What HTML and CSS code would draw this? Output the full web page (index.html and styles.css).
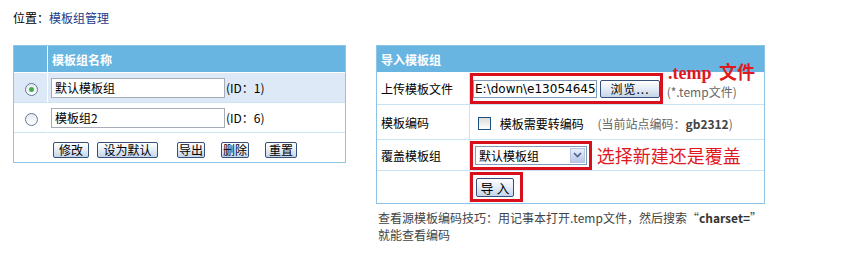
FILE: index.html
```html
<!DOCTYPE html>
<html lang="zh-CN">
<head>
    <meta charset="UTF-8">
    <title>模板组管理</title>
    <link rel="stylesheet" href="styles.css">
</head>
<body>

<div class="crumb">位置：<a href="#">模板组管理</a></div>

<div class="main">
    <!-- 模板组列表 -->
    <table class="grid grid-left">
        <colgroup>
            <col class="c-radio">
            <col>
        </colgroup>
        <tr class="head">
            <th class="col-radio"></th>
            <th>模板组名称</th>
        </tr>
        <tr class="row-on">
            <td class="col-radio"><span class="radio checked"></span></td>
            <td><input class="txt" type="text" value="默认模板组"><span class="id">(ID：1)</span></td>
        </tr>
        <tr>
            <td class="col-radio"><span class="radio"></span></td>
            <td><input class="txt" type="text" value="模板组2"><span class="id">(ID：6)</span></td>
        </tr>
        <tr class="row-btns">
            <td class="col-radio"></td>
            <td>
                <div class="btns">
                    <button class="btn w36">修改</button>
                    <button class="btn w61">设为默认</button>
                    <button class="btn w28">导出</button>
                    <button class="btn w28">删除</button>
                    <button class="btn w32">重置</button>
                </div>
            </td>
        </tr>
    </table>

    <!-- 导入模板组 -->
    <div class="side">
        <table class="grid grid-right">
            <colgroup>
                <col class="c-label">
                <col>
            </colgroup>
            <tr class="head">
                <th colspan="2">导入模板组</th>
            </tr>
            <tr class="r1">
                <td class="label">上传模板文件</td>
                <td class="val">
                    <span class="mark mark-file">
                        <input class="file-path" type="text" value="E:\down\e1305464583">
                        <button class="btn browse">浏览...</button>
                    </span>
                    <span class="gray low">(*.temp文件)</span>
                    <span class="note note-temp">.temp 文件</span>
                </td>
            </tr>
            <tr class="r2">
                <td class="label">模板编码</td>
                <td class="val">
                    <span class="check"></span>
                    <span class="check-text">模板需要转编码</span>
                    <span class="gray">(当前站点编码：<b>gb2312</b>)</span>
                </td>
            </tr>
            <tr class="r3">
                <td class="label">覆盖模板组</td>
                <td class="val">
                    <span class="mark mark-select">
                        <span class="select">默认模板组<span class="arrow"><svg width="9" height="6" viewBox="0 0 9 6"><path d="M1 1 L4.5 4.5 L8 1" fill="none" stroke="#4d6185" stroke-width="1.6"/></svg></span></span>
                    </span>
                    <span class="note note-cover">选择新建还是覆盖</span>
                </td>
            </tr>
            <tr class="r4">
                <td class="label"></td>
                <td class="val">
                    <span class="mark mark-import"><button class="btn import">导 入</button></span>
                </td>
            </tr>
        </table>
        <p class="tip">查看源模板编码技巧：用记事本打开.temp文件，然后搜索“<b>charset=</b>”<br>就能查看编码</p>
    </div>
</div>

</body>
</html>
```

FILE: styles.css
```css
body {
    margin: 0;
    font-family: "Noto Sans CJK SC", "DejaVu Sans", sans-serif;
    font-size: 12px;
    color: #000;
    background: #fff;
}
.crumb {
    padding: 10px 0 0 13px;
    height: 16px;
    line-height: 16px;
}
.crumb a {
    color: #1a3a8a;
    text-decoration: none;
}
.main {
    display: flex;
    align-items: flex-start;
    gap: 30px;
    padding: 19px 0 0 13px;
}

/* tables */
.grid {
    border-collapse: separate;
    border-spacing: 0;
    border: 1px solid #8ec5e6;
    table-layout: fixed;
}
.grid th,
.grid td {
    padding: 0;
    text-align: left;
    vertical-align: middle;
    border-bottom: 1px solid #c9e3f4;
}
.grid tr:last-child td {
    border-bottom: none;
}
.grid .head th {
    height: 26px;
    background: #68b5e1;
    color: #fff;
    font-weight: bold;
    border-bottom: 1px solid #fff;
    padding-left: 4px;
}
.grid-left {
    width: 333px;
}
.c-radio {
    width: 34px;
}
.grid-left td {
    height: 29px;
    padding-left: 3px;
}
.grid-left .col-radio,
.grid-left .head .col-radio {
    text-align: center;
    border-right: 1px solid #fff;
    padding-left: 0;
}
.row-on td {
    background: #dde9f6;
}
.radio {
    display: inline-block;
    width: 11px;
    height: 11px;
    border: 1px solid #5e7b9c;
    border-radius: 50%;
    background: linear-gradient(#e6e9ee, #fff);
    vertical-align: middle;
    position: relative;
    margin-left: 2px;
}
.radio.checked::after {
    content: "";
    position: absolute;
    left: 3px;
    top: 3px;
    width: 5px;
    height: 5px;
    border-radius: 50%;
    background: #3fb04a;
}
.txt {
    width: 174px;
    height: 20px;
    box-sizing: border-box;
    border: 1px solid #a5acb5;
    padding: 0 3px;
    font: inherit;
    font-size: 12px;
    vertical-align: middle;
}
.id {
    vertical-align: middle;
    margin-left: 1px;
}
.btns {
    display: flex;
    align-items: center;
    gap: 16px;
    padding: 4px 0 0 2px;
}
.btn {
    height: 16px;
    box-sizing: border-box;
    padding: 0;
    font: inherit;
    font-size: 12px;
    line-height: 13px;
    color: #000;
    border: 1px solid #36507a;
    border-radius: 2px;
    background: linear-gradient(#ffffff, #e4ecf6 50%, #c4d4ea);
    cursor: pointer;
}
.w36 { width: 36px; margin-right: -8px; }
.w61 { width: 61px; margin-right: 3px; }
.w28 { width: 28px; }
.w32 { width: 32px; }

/* right side */
.grid-right {
    width: 389px;
}
.c-label {
    width: 93px;
}
.grid-right .label {
    padding-left: 4px;
    border-right: 1px solid #c9e3f4;
}
.grid-right .val {
    position: relative;
    white-space: nowrap;
}
.r1 td { height: 30px; }
.r2 td { height: 34px; }
.r3 td { height: 30px; }
.r4 td { height: 32px; }
.mark {
    display: inline-flex;
    align-items: center;
    border: 3px solid #d8101c;
    vertical-align: middle;
    box-sizing: border-box;
}
.mark-file {
    width: 193px;
    height: 31px;
    gap: 3px;
}
.file-path {
    width: 124px;
    height: 18px;
    box-sizing: border-box;
    border: 1px solid #7f9db9;
    padding: 0 1px;
    font-family: "DejaVu Sans", sans-serif;
    font-size: 12px;
    overflow: hidden;
}
.browse {
    width: 61px;
    height: 18px;
    text-align: center;
    letter-spacing: 1px;
}
.gray {
    color: #666;
    vertical-align: middle;
    margin-left: 1px;
}
.gray.low {
    display: inline-block;
    padding-top: 6px;
}
.gray b {
    color: #444;
}
.note {
    position: absolute;
    color: #e0191f;
    font-family: "Liberation Serif", "Noto Sans CJK SC", serif;
    font-size: 18px;
    line-height: 18px;
}
.note-temp {
    left: 198px;
    top: -9px;
    font-weight: bold;
    word-spacing: 3px;
}
.note-cover {
    position: static;
    font-family: "Noto Sans CJK SC", serif;
    vertical-align: middle;
    margin-left: 2px;
}
.check {
    display: inline-block;
    width: 11px;
    height: 11px;
    border: 1px solid #1c5180;
    background: linear-gradient(#dcdcd6, #fff);
    vertical-align: middle;
    margin: 0 6px 0 8px;
}
.check-text {
    vertical-align: middle;
    margin-right: 10px;
}
.mark-select {
    width: 122px;
    height: 29px;
    padding-left: 2px;
}
.select {
    position: relative;
    display: inline-block;
    width: 112px;
    height: 19px;
    box-sizing: border-box;
    border: 1px solid #7f9db9;
    line-height: 17px;
    padding-left: 3px;
}
.arrow {
    position: absolute;
    right: 1px;
    top: 1px;
    width: 15px;
    height: 15px;
    box-sizing: border-box;
    border: 1px solid #b6c6e0;
    background: linear-gradient(#e8eefb, #b8c8ea);
    display: flex;
    align-items: center;
    justify-content: center;
}
.mark-import {
    width: 53px;
    height: 30px;
    padding-left: 3px;
}
.import {
    width: 38px;
    height: 19px;
    font-size: 13px;
}
.tip {
    margin: 5px 0 0 2px;
    line-height: 17px;
    color: #444;
}
.tip b {
    color: #333;
}
```
